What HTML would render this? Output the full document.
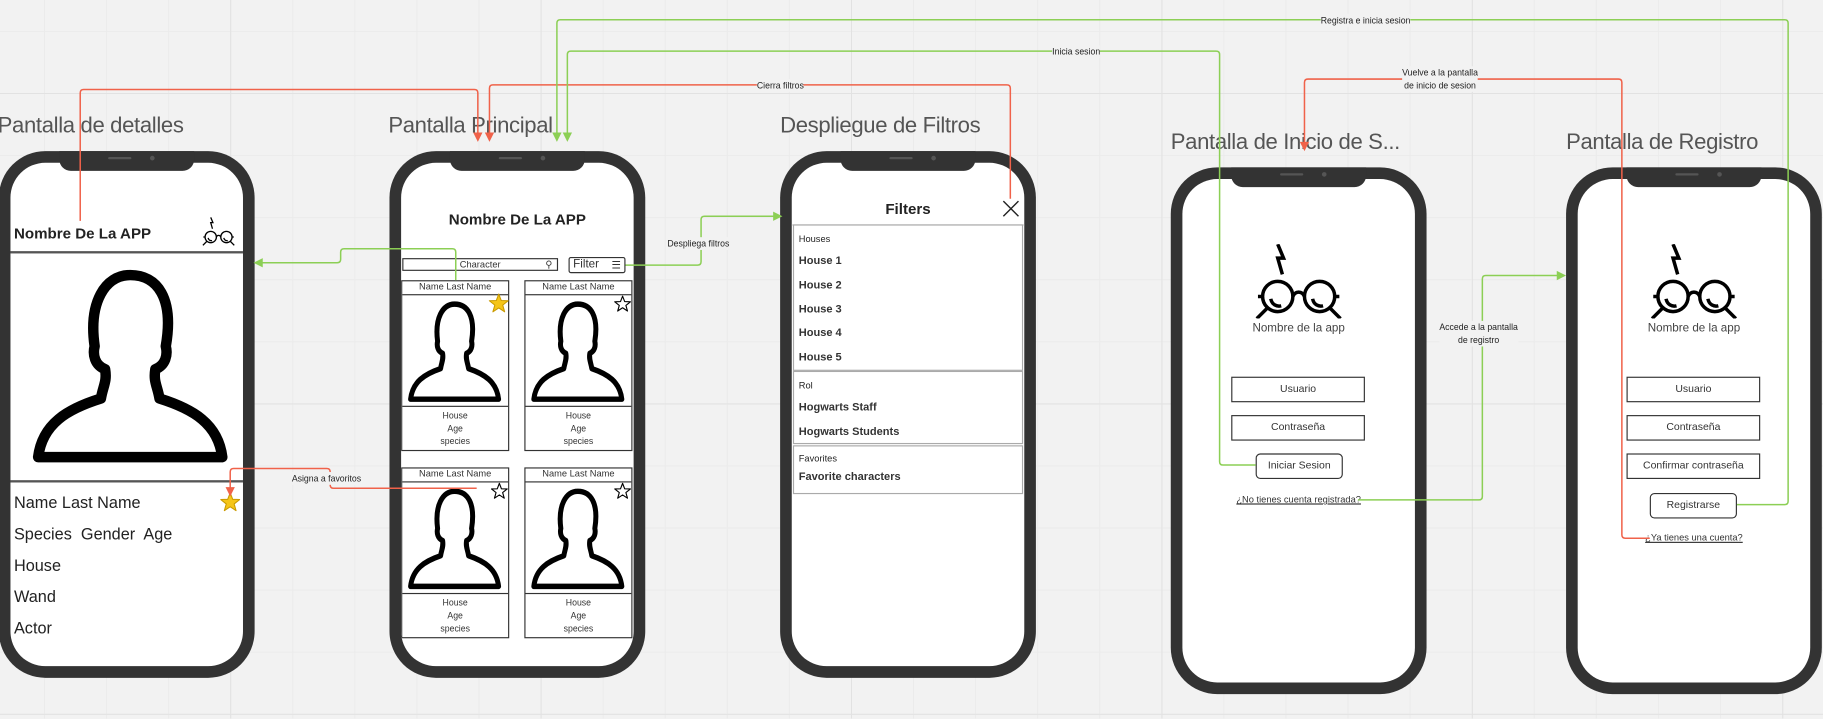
<!DOCTYPE html>
<html><head><meta charset="utf-8">
<style>
html,body{margin:0;padding:0;width:1823px;height:719px;overflow:hidden;background:#f2f2f2;}
#w{position:absolute;left:0;top:0;width:1568px;height:618px;transform:scale(1.16263);transform-origin:0 0;font-family:"Liberation Sans",sans-serif;
background-color:#f2f2f2;
background-image:linear-gradient(to right,#e2e2e2 1px,transparent 1px),linear-gradient(to bottom,#e2e2e2 1px,transparent 1px),linear-gradient(to right,#ebebeb 1px,transparent 1px),linear-gradient(to bottom,#ebebeb 1px,transparent 1px);
background-size:267px 267px,267px 267px,53.4px 53.4px,53.4px 53.4px;
background-position:198px 80px,198px 80px,198px 80px,198px 80px;}
.a{position:absolute;}
.title{position:absolute;font-size:19px;color:#555;white-space:nowrap;letter-spacing:-0.3px;}
.phone{position:absolute;width:220px;height:453px;background:#333;border-radius:40px;}
.scr{position:absolute;left:10px;top:10px;right:10px;bottom:10px;background:#fff;border-radius:30px;overflow:hidden;}
.notch{position:absolute;left:50%;margin-left:-58px;top:0;width:116px;height:17px;background:#333;border-radius:0 0 10px 10px;}
.notch:before{content:"";position:absolute;left:42px;top:5px;width:20px;height:2px;background:#555;border-radius:1px;}
.notch:after{content:"";position:absolute;left:78px;top:4px;width:4px;height:4px;background:#555;border-radius:2px;}
.t{position:absolute;white-space:nowrap;color:#222;}
.b{font-weight:bold;}
.box{position:absolute;border:1.5px solid #333;background:#fff;box-sizing:border-box;font-size:9px;text-align:center;color:#333;}
.card{position:absolute;width:93px;height:147px;border:1.5px solid #333;box-sizing:border-box;background:#fff;}
.card .h{position:absolute;left:0;right:0;top:0;height:11px;border-bottom:1.5px solid #333;font-size:8px;text-align:center;line-height:10px;color:#333;}
.card .im{position:absolute;left:0;right:0;top:11px;height:96px;border-bottom:1.5px solid #333;}
.card .tx{position:absolute;left:0;right:0;top:110px;font-size:7.5px;text-align:center;line-height:11px;color:#333;}
.lbl{position:absolute;font-size:7.5px;color:#222;background:#f2f2f2;white-space:nowrap;text-align:center;line-height:11px;}
.fl{position:absolute;left:1px;right:1px;border:1.5px solid #aaa;box-sizing:border-box;}
</style></head><body>
<div id="w">
<svg width="0" height="0" style="position:absolute">
<defs>
<symbol id="sil" viewBox="0 0 100 100"><path d="M36 66 C37 60 39 58 38 52 C33 50 32 45 33 41 C30 20 38 7 50 7 C63 7 71 18 67 41 C68 45 67 50 62 52 C61 58 63 60 64 66 C80 71 92 78 94 94 L6 94 C8 78 20 71 36 66 Z" fill="#fff" stroke="#000" stroke-width="5" stroke-linejoin="round"/></symbol>
<symbol id="gl" viewBox="0 0 80 64"><path d="M22 0 L27 12 L22 12 L26 26" fill="none" stroke="#000" stroke-width="3"/><circle cx="22" cy="45" r="13" fill="none" stroke="#000" stroke-width="3"/><circle cx="58" cy="45" r="13" fill="none" stroke="#000" stroke-width="3"/><path d="M35 45 C37 40 43 40 45 45 M9 45 L5 45 M71 45 L75 45 M13 55 L4 64 M67 55 L76 64 M16 47 C17 52 21 54 25 53 M52 47 C53 52 57 54 61 53" fill="none" stroke="#000" stroke-width="3"/></symbol>
<symbol id="star" viewBox="0 0 20 20"><path d="M10 1 L12.4 7.2 L19 7.4 L13.8 11.6 L15.6 18 L10 14.3 L4.4 18 L6.2 11.6 L1 7.4 L7.6 7.2 Z" stroke-linejoin="round"/></symbol>
</defs></svg>

<div class="title" style="left:-2px;top:98px;">Pantalla de detalles</div>
<div class="title" style="left:334px;top:98px;">Pantalla Principal</div>
<div class="title" style="left:671px;top:98px;">Despliegue de Filtros</div>
<div class="title" style="left:1007px;top:112px;">Pantalla de Inicio de S...</div>
<div class="title" style="left:1347px;top:112px;">Pantalla de Registro</div>

<!-- Phone 1 -->
<div class="phone" style="left:-1px;top:130px;"><div class="scr">
<div class="t b" style="left:3px;top:53px;font-size:13px;">Nombre De La APP</div>
<svg class="a" style="left:164px;top:45px" width="30" height="28"><use href="#gl"/></svg>
<div class="a" style="left:0;right:0;top:76px;height:1.5px;background:#555"></div>
<svg class="a" style="left:13px;top:84px" width="180" height="180" viewBox="0 0 100 100" preserveAspectRatio="none"><use href="#sil"/></svg>
<div class="a" style="left:0;right:0;top:273px;height:1.5px;background:#555"></div>
<div class="t" style="left:3px;top:279px;font-size:14px;line-height:27px;">Name Last Name<br>Species&nbsp; Gender&nbsp; Age<br>House<br>Wand<br>Actor</div>
<svg class="a" style="left:180px;top:283px" width="18" height="18"><use href="#star" fill="#f5c518" stroke="#c99a00"/></svg>
</div><div class="notch"></div></div>

<!-- Phone 2 -->
<div class="phone" style="left:335px;top:130px;"><div class="scr">
<div class="t b" style="left:0;right:0;text-align:center;top:41px;font-size:13px;">Nombre De La APP</div>
<div class="box" style="left:1px;top:82px;width:134px;height:11px;border-width:1px;font-size:8px;line-height:9px;">Character<span style="position:absolute;right:4px;">⚲</span></div>
<div class="box" style="left:144px;top:81px;width:49px;height:14px;border-width:1px;border-radius:2px;font-size:10px;line-height:12px;text-align:left;padding-left:3px;">Filter<span style="position:absolute;right:3px;font-size:9px;">☰</span></div>
<div class="card" style="left:0;top:101px;"><div class="h">Name Last Name</div><div class="im"><svg class="a" style="left:2px;top:2px" width="86" height="94" viewBox="0 0 100 100" preserveAspectRatio="none"><use href="#sil"/></svg></div><div class="tx">House<br>Age<br>species</div>
<svg class="a" style="left:74px;top:10px" width="18" height="18"><use href="#star" fill="#f5c518" stroke="#c99a00"/></svg></div>
<div class="card" style="left:106px;top:101px;"><div class="h">Name Last Name</div><div class="im"><svg class="a" style="left:2px;top:2px" width="86" height="94" viewBox="0 0 100 100" preserveAspectRatio="none"><use href="#sil"/></svg></div><div class="tx">House<br>Age<br>species</div>
<svg class="a" style="left:76px;top:12px" width="15" height="15"><use href="#star" fill="#fff" stroke="#000" stroke-width="1.3"/></svg></div>
<div class="card" style="left:0;top:262px;"><div class="h">Name Last Name</div><div class="im"><svg class="a" style="left:2px;top:2px" width="86" height="94" viewBox="0 0 100 100" preserveAspectRatio="none"><use href="#sil"/></svg></div><div class="tx">House<br>Age<br>species</div>
<svg class="a" style="left:76px;top:12px" width="15" height="15"><use href="#star" fill="#fff" stroke="#000" stroke-width="1.3"/></svg></div>
<div class="card" style="left:106px;top:262px;"><div class="h">Name Last Name</div><div class="im"><svg class="a" style="left:2px;top:2px" width="86" height="94" viewBox="0 0 100 100" preserveAspectRatio="none"><use href="#sil"/></svg></div><div class="tx">House<br>Age<br>species</div>
<svg class="a" style="left:76px;top:12px" width="15" height="15"><use href="#star" fill="#fff" stroke="#000" stroke-width="1.3"/></svg></div>
</div><div class="notch"></div></div>

<!-- Phone 3 -->
<div class="phone" style="left:671px;top:130px;"><div class="scr">
<div class="t b" style="left:0;right:0;text-align:center;top:32px;font-size:13px;">Filters</div>
<svg class="a" style="left:181px;top:32px" width="15" height="15"><path d="M1 1 L14 14 M14 1 L1 14" stroke="#222" stroke-width="1.2"/></svg>
<div class="a" style="left:0;right:0;top:53px;height:1px;background:#ccc"></div>
<div class="fl" style="top:53px;height:126px;"></div>
<div class="fl" style="top:179px;height:63px;"></div>
<div class="fl" style="top:243px;height:42px;"></div>
<div class="t" style="left:6px;top:61px;font-size:8px;">Houses</div>
<div class="t b" style="left:6px;top:75px;font-size:9.5px;line-height:20.8px;color:#333">House 1<br>House 2<br>House 3<br>House 4<br>House 5</div>
<div class="t" style="left:6px;top:187px;font-size:8px;">Rol</div>
<div class="t b" style="left:6px;top:200px;font-size:9.5px;line-height:21px;color:#333">Hogwarts Staff<br>Hogwarts Students</div>
<div class="t" style="left:6px;top:250px;font-size:8px;">Favorites</div>
<div class="t b" style="left:6px;top:265px;font-size:9.5px;color:#333">Favorite characters</div>
</div><div class="notch"></div></div>

<!-- Phone 4 -->
<div class="phone" style="left:1007px;top:144px;"><div class="scr">
<svg class="a" style="left:60px;top:56px" width="80" height="64"><use href="#gl"/></svg>
<div class="t" style="left:0;right:0;text-align:center;top:123px;font-size:10px;color:#444">Nombre de la app</div>
<div class="box" style="left:42px;top:170px;width:115px;height:22px;line-height:19px;">Usuario</div>
<div class="box" style="left:42px;top:203px;width:115px;height:22px;line-height:19px;">Contraseña</div>
<div class="box" style="left:63px;top:236px;width:75px;height:22px;line-height:19px;border-radius:4px;border-width:1px;">Iniciar Sesion</div>
<div class="t" style="left:0;right:0;text-align:center;top:271px;font-size:8px;text-decoration:underline;color:#333">¿No tienes cuenta registrada?</div>
</div><div class="notch"></div></div>

<!-- Phone 5 -->
<div class="phone" style="left:1347px;top:144px;"><div class="scr">
<svg class="a" style="left:60px;top:56px" width="80" height="64"><use href="#gl"/></svg>
<div class="t" style="left:0;right:0;text-align:center;top:123px;font-size:10px;color:#444">Nombre de la app</div>
<div class="box" style="left:42px;top:170px;width:115px;height:22px;line-height:19px;">Usuario</div>
<div class="box" style="left:42px;top:203px;width:115px;height:22px;line-height:19px;">Contraseña</div>
<div class="box" style="left:42px;top:236px;width:115px;height:22px;line-height:19px;">Confirmar contraseña</div>
<div class="box" style="left:62px;top:270px;width:75px;height:22px;line-height:19px;border-radius:4px;border-width:1px;">Registrarse</div>
<div class="t" style="left:0;right:0;text-align:center;top:304px;font-size:8px;text-decoration:underline;color:#333">¿Ya tienes una cuenta?</div>
</div><div class="notch"></div></div>

<!-- connectors -->
<svg class="a" style="left:0;top:0" width="1568" height="618">
<g fill="none" stroke-width="1.3">
<path d="M69 190 V80 Q69 77 72 77 H408 Q411 77 411 80 V116" stroke="#f0624a"/>
<path d="M869 171 V76 Q869 73 866 73 H424 Q421 73 421 76 V116" stroke="#f0624a"/>
<path d="M1080 400 H1052 Q1049 400 1049 397 V47 Q1049 44 1046 44 H491 Q488 44 488 47 V116" stroke="#8ccf55"/>
<path d="M1494 434 H1535 Q1538 434 1538 431 V20 Q1538 17 1535 17 H482 Q479 17 479 20 V116" stroke="#8ccf55"/>
<path d="M1419 463 H1398 Q1395 463 1395 460 V71 Q1395 68 1392 68 H1125 Q1122 68 1122 71 V124" stroke="#f0624a"/>
<path d="M538 228 H600 Q603 228 603 225 V189 Q603 186 606 186 H666" stroke="#8ccf55"/>
<path d="M392 241 V217 Q392 214 389 214 H296 Q293 214 293 217 V223 Q293 226 290 226 H224" stroke="#8ccf55"/>
<path d="M410 420 H287 Q284 420 284 417 V406 Q284 403 281 403 H201 Q198 403 198 406 V421" stroke="#f0624a"/>
<path d="M1168 430 H1272 Q1275 430 1275 427 V240 Q1275 237 1278 237 H1340" stroke="#8ccf55"/>
</g>
<g>
<path d="M407 114 L411 122 L415 114 Z M417 114 L421 122 L425 114 Z M1118 122 L1122 130 L1126 122 Z M194 419 L198 427 L202 419 Z" fill="#f0624a"/>
<path d="M475 114 L479 122 L483 114 Z M484 114 L488 122 L492 114 Z M665 182 L673 186 L665 190 Z M226 222 L218 226 L226 230 Z M1339 233 L1347 237 L1339 241 Z" fill="#8ccf55"/>
</g>
</svg>
<div class="lbl" style="left:1136px;top:12px;">Registra e inicia sesion</div>
<div class="lbl" style="left:905px;top:39px;">Inicia sesion</div>
<div class="lbl" style="left:651px;top:68px;">Cierra filtros</div>
<div class="lbl" style="left:1206px;top:57px;">Vuelve a la pantalla<br>de inicio de sesion</div>
<div class="lbl" style="left:574px;top:204px;">Despliega filtros</div>
<div class="lbl" style="left:251px;top:406px;">Asigna a favoritos</div>
<div class="lbl" style="left:1238px;top:276px;">Accede a la pantalla<br>de registro</div>
</div>
</body></html>
